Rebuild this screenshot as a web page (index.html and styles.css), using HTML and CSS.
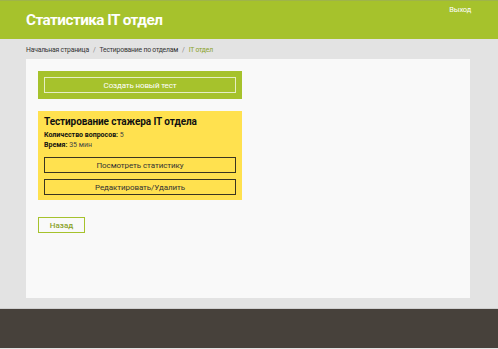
FILE: index.html
```html
<!DOCTYPE html>
<html lang="ru">
<head>
    <meta charset="UTF-8">
    <meta name="viewport" content="width=device-width, initial-scale=1.0">
    <title>Статистика IT отдел</title>
    <link rel="stylesheet" href="styles.css">
</head>
<body>
    <header class="top-bar">
        <h1 class="page-title">Статистика IT отдел</h1>
        <a href="#" class="logout">Выход</a>
    </header>
    <div class="breadcrumbs">
        <a href="#">Начальная страница</a>
        <span class="sep">/</span>
        <a href="#">Тестирование по отделам</a>
        <span class="sep">/</span>
        <span class="current">IT отдел</span>
    </div>
    <main class="panel">
        <div class="create-box">
            <a href="#" class="create-btn">Создать новый тест</a>
        </div>
        <section class="test-card">
            <h2>Тестирование стажера IT отдела</h2>
            <p><b>Количество вопросов:</b> 5</p>
            <p><b>Время:</b> 35 мин</p>
            <a href="#" class="card-btn">Посмотреть статистику</a>
            <a href="#" class="card-btn">Редактировать/Удалить</a>
        </section>
        <a href="#" class="back-btn">Назад</a>
    </main>
    <footer class="footer"></footer>
</body>
</html>
```

FILE: styles.css
```css
* {
    margin: 0;
    padding: 0;
    box-sizing: border-box;
}
body {
    font-family: Roboto, 'Liberation Sans', sans-serif;
    background: #e3e3e3;
    color: #333;
    min-height: 100vh;
}
a { text-decoration: none; color: inherit; }
.top-bar { position: relative; height: 39px; background: #a6c22c; border-top: 1px solid #9fb44a; padding: 0 26px; display: flex; align-items: center; }
.page-title { color: #fff; font-size: 15.3px; font-weight: 700; letter-spacing: -0.55px; }
.logout { position: absolute; top: 4px; right: 27px; color: #fff; font-size: 7.5px; letter-spacing: -0.2px; }
.breadcrumbs { height: 20px; padding: 2px 26px 0; display: flex; align-items: center; gap: 3px; font-size: 6.8px; letter-spacing: -0.2px; color: #333; }
.breadcrumbs .sep { color: #888; margin: 0 1px; }
.breadcrumbs .current { color: #8aa22a; }
.panel { margin: 0 28px 0 26px; height: 239px; background: #f9f9f9; padding: 12px; }
.create-box { width: 204px; background: #a6c22c; padding: 6px; margin-bottom: 12px; }
.create-btn { display: flex; align-items: center; justify-content: center; height: 16px; border: 1px solid #e6eec4; color: #fff; font-size: 8px; letter-spacing: -0.15px; }
.test-card { width: 204px; background: #ffe14f; padding: 4px 6px 5px; margin-bottom: 17px; }
.test-card h2 { font-size: 10px; font-weight: 700; color: #111; line-height: 13px; margin-bottom: 2px; letter-spacing: -0.1px; }
.test-card p { font-size: 7px; line-height: 10px; color: #444; }
.test-card p b { color: #111; }
.card-btn { display: flex; align-items: center; justify-content: center; height: 16px; border: 1.5px solid #3a3520; font-size: 8px; letter-spacing: -0.1px; color: #333; margin-top: 6px; }
.test-card p + .card-btn { margin-top: 7px; }
.back-btn { display: flex; align-items: center; justify-content: center; width: 47px; height: 16px; border: 1.5px solid #a6c22c; color: #8aa22a; font-size: 8px; font-weight: 500; }
.footer { margin-top: 10px; border-top: 1px solid #cfcfcf; background: #47413b; height: 40px; }
```
